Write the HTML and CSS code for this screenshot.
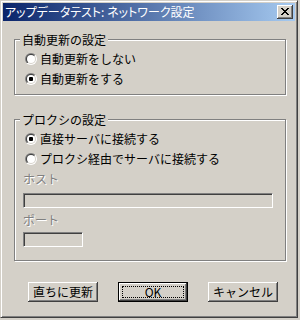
FILE: index.html
```html
<!DOCTYPE html>
<html lang="ja">
<head>
<meta charset="utf-8">
<title>ネットワーク設定</title>
<link rel="stylesheet" href="styles.css">
</head>
<body>
<div class="window">
  <div class="titlebar">
    <span class="title">アップデータテスト: ネットワーク設定</span>
    <span class="close"><svg width="8" height="7" viewBox="0 0 8 7"><path d="M0 0h2v1h-2zM6 0h2v1h-2zM1 1h2v1h-2zM5 1h2v1h-2zM2 2h4v1h-4zM3 3h2v1h-2zM2 4h4v1h-4zM1 5h2v1h-2zM5 5h2v1h-2zM0 6h2v1h-2zM6 6h2v1h-2z" fill="#000"/></svg></span>
  </div>
  <div class="client">
    <div class="group g1">
      <div class="legend"><span>自動更新の設定</span></div>
      <div class="row first"><span class="radio"></span><span>自動更新をしない</span></div>
      <div class="row"><span class="radio checked"></span><span>自動更新をする</span></div>
    </div>
    <div class="group g2">
      <div class="legend"><span>プロクシの設定</span></div>
      <div class="row first"><span class="radio checked"></span><span>直接サーバに接続する</span></div>
      <div class="row"><span class="radio"></span><span>プロクシ経由でサーバに接続する</span></div>
      <div class="label host-label">ホスト</div>
      <div class="input host"></div>
      <div class="label port-label">ポート</div>
      <div class="input port"></div>
    </div>
    <div class="buttons">
      <div class="btn">直ちに更新</div>
      <div class="btn default"><span class="focus">OK</span></div>
      <div class="btn">キャンセル</div>
    </div>
  </div>
</div>
</body>
</html>
```

FILE: styles.css
```css
html, body {
  margin: 0;
  padding: 0;
  background: #d4d0c8;
}
body {
  width: 300px;
  height: 320px;
  overflow: hidden;
}
.window {
  width: 298px;
  height: 318px;
  box-sizing: border-box;
  border: 1px solid;
  border-color: #d4d0c8 #404040 #404040 #d4d0c8;
  box-shadow: inset 1px 1px 0 #fff, inset -1px -1px 0 #808080;
  padding: 2px;
  background: #d4d0c8;
  font-family: "Noto Sans CJK JP", sans-serif;
  font-size: 12px;
  line-height: 12px;
  color: #000;
}
.titlebar {
  height: 18px;
  display: flex;
  align-items: center;
  justify-content: space-between;
  background: linear-gradient(to right, #0a246a, #a6caf0);
  padding: 0 2px;
}
.title {
  color: #fff;
  font-feature-settings: "palt";
  white-space: nowrap;
}
.close {
  width: 16px;
  height: 14px;
  box-sizing: border-box;
  background: #d4d0c8;
  box-shadow: inset -1px -1px 0 #404040, inset 1px 1px 0 #fff, inset -2px -2px 0 #808080, inset 2px 2px 0 #d4d0c8;
  display: flex;
  align-items: center;
  justify-content: center;
  padding: 0 1px 1px 0;
}
.close svg { display: block; }
.client {
  padding-left: 11px;
}
.group {
  box-sizing: border-box;
  width: 272px;
  border: 1px solid #808080;
  box-shadow: 1px 1px 0 #fff, inset 1px 1px 0 #fff;
}
.g1 {
  margin-top: 18px;
  height: 56px;
}
.g2 {
  margin-top: 24px;
  height: 142px;
}
.legend {
  display: flex;
  margin-top: -6px;
  height: 12px;
}
.legend span {
  background: #d4d0c8;
  padding: 0 2px;
  margin-left: 5px;
}
.row {
  display: flex;
  align-items: center;
  gap: 3px;
  height: 20px;
  padding-left: 10px;
}
.row.first {
  margin-top: 3px;
}
.radio {
  position: relative;
  width: 12px;
  height: 12px;
  border-radius: 50%;
  background: linear-gradient(135deg, #808080 50%, #fff 50%);
  flex: none;
}
.radio::before {
  content: "";
  position: absolute;
  left: 1px;
  top: 1px;
  width: 10px;
  height: 10px;
  border-radius: 50%;
  background: linear-gradient(135deg, #404040 50%, #d4d0c8 50%);
}
.radio::after {
  content: "";
  position: absolute;
  left: 2px;
  top: 2px;
  width: 8px;
  height: 8px;
  border-radius: 50%;
  background: #fff;
}
.radio.checked::after {
  background: radial-gradient(circle at 50% 50%, #000 0, #000 2px, #fff 2.5px);
}
.label {
  height: 12px;
  padding-left: 8px;
  color: #808080;
  text-shadow: 1px 1px 0 #fff;
}
.host-label { margin-top: 4px; }
.port-label { margin-top: 6px; }
.input {
  box-sizing: border-box;
  height: 15px;
  margin-left: 8px;
  border: 1px solid;
  border-color: #808080 #fff #fff #808080;
  box-shadow: inset 1px 1px 0 #404040, inset -1px -1px 0 #d4d0c8;
  background: #d4d0c8;
}
.host {
  width: 250px;
  margin-top: 8px;
}
.port {
  width: 60px;
  margin-top: 6px;
}
.buttons {
  display: flex;
  gap: 20px;
  margin-top: 21px;
  margin-left: 14px;
}
.btn {
  width: 70px;
  height: 20px;
  box-sizing: border-box;
  display: flex;
  align-items: center;
  justify-content: center;
  box-shadow: inset -1px -1px 0 #404040, inset 1px 1px 0 #fff, inset -2px -2px 0 #808080, inset 2px 2px 0 #d4d0c8;
}
.btn.default {
  box-shadow: inset 0 0 0 1px #000, inset -2px -2px 0 #404040, inset 2px 2px 0 #fff, inset -3px -3px 0 #808080, inset 3px 3px 0 #d4d0c8;
  padding: 4px;
}
.focus {
  flex: 1;
  align-self: stretch;
  border: 1px dotted #000;
  display: flex;
  align-items: center;
  justify-content: center;
}
```
